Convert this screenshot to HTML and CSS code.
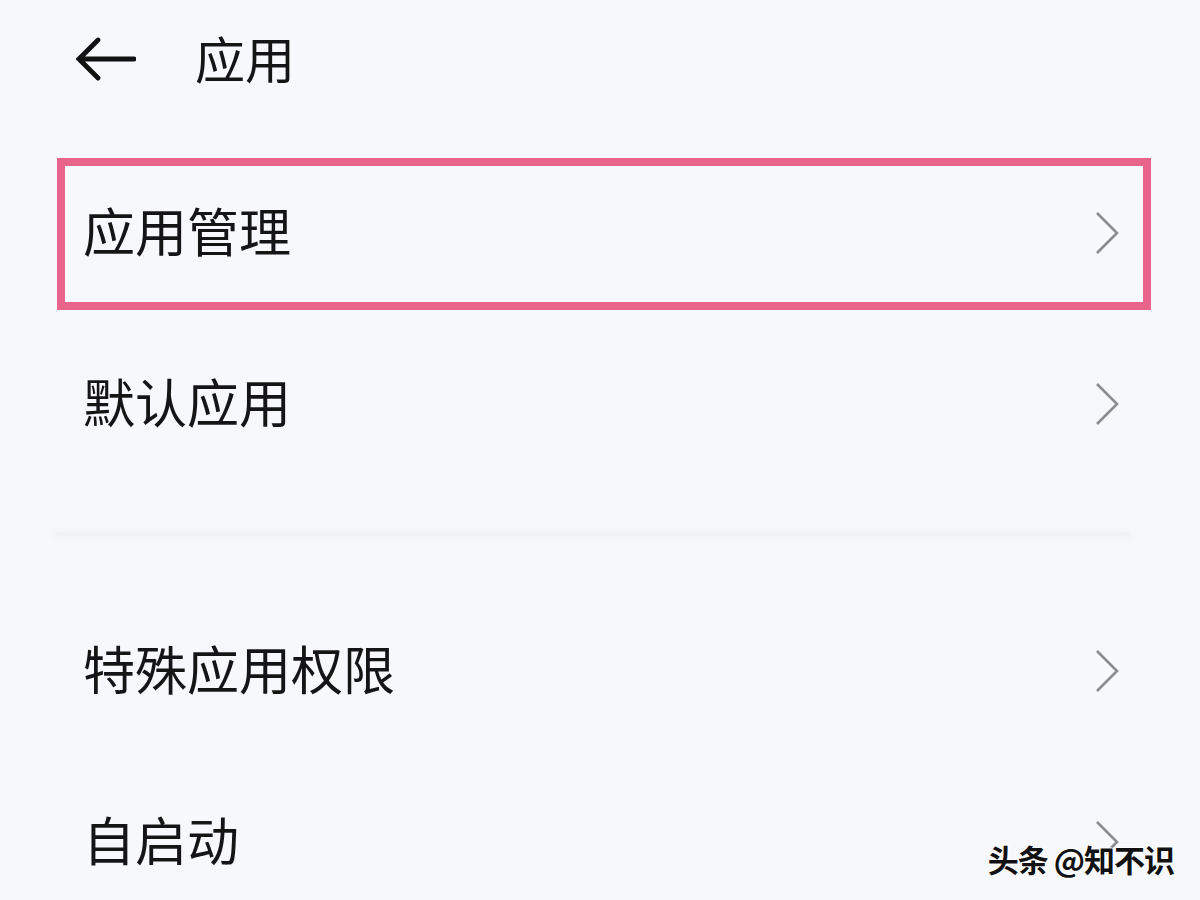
FILE: index.html
```html
<!DOCTYPE html>
<html lang="zh-CN">
<head>
<meta charset="utf-8">
<title>应用</title>
<link rel="stylesheet" href="styles.css">
</head>
<body>
<div class="screen">
  <header class="topbar">
    <svg class="back" width="60" height="44" viewBox="0 0 60 44" aria-hidden="true">
      <path d="M3 22 H58 M22 3 L3 22 L22 41" fill="none" stroke="#111" stroke-width="4.8" stroke-linecap="round" stroke-linejoin="miter"/>
    </svg>
    <h1 class="title">应用</h1>
  </header>
  <main class="list">
    <div class="row row-marked">
      <span class="label">应用管理</span>
      <svg class="chev" width="24" height="44" viewBox="0 0 24 44" aria-hidden="true"><path d="M2 2 L22 22 L2 42" fill="none" stroke="#8c8c8c" stroke-width="2.6"/></svg>
    </div>
    <div class="row">
      <span class="label">默认应用</span>
      <svg class="chev" width="24" height="44" viewBox="0 0 24 44" aria-hidden="true"><path d="M2 2 L22 22 L2 42" fill="none" stroke="#8c8c8c" stroke-width="2.6"/></svg>
    </div>
    <div class="divider"></div>
    <div class="row">
      <span class="label">特殊应用权限</span>
      <svg class="chev" width="24" height="44" viewBox="0 0 24 44" aria-hidden="true"><path d="M2 2 L22 22 L2 42" fill="none" stroke="#8c8c8c" stroke-width="2.6"/></svg>
    </div>
    <div class="row">
      <span class="label">自启动</span>
      <svg class="chev" width="24" height="44" viewBox="0 0 24 44" aria-hidden="true"><path d="M2 2 L22 22 L2 42" fill="none" stroke="#8c8c8c" stroke-width="2.6"/></svg>
    </div>
  </main>
  <div class="watermark">头条 @知不识</div>
</div>
</body>
</html>
```

FILE: styles.css
```css
html, body {
  margin: 0;
  padding: 0;
}

body {
  background: #f7f8fc;
  font-family: "Noto Sans CJK SC", "Noto Sans", sans-serif;
  color: #151515;
}

.screen {
  position: relative;
  width: 1200px;
  height: 900px;
  overflow: hidden;
  background: #f7f8fc;
}

.topbar {
  height: 120px;
  display: flex;
  align-items: center;
  padding-left: 76px;
  box-sizing: border-box;
}

.back {
  display: block;
  margin-top: -2px;
}

.title {
  margin: -6px 0 0 59px;
  font-size: 50px;
  font-weight: 400;
  line-height: 1;
  color: #151515;
}

.list {
  padding-top: 38px;
  display: flex;
  flex-direction: column;
}

.row {
  box-sizing: border-box;
  height: 152px;
  margin: 0 49px 19px 57px;
  border: 8px solid transparent;
  padding: 0 24px 0 18px;
  display: flex;
  align-items: center;
  justify-content: space-between;
}

.row-marked {
  border-color: #e8648d;
}

.label {
  margin-top: -8px;
  font-size: 52px;
  line-height: 1;
  font-weight: 400;
  color: #151515;
}

.chev {
  display: block;
  margin-top: -2px;
}

.divider {
  height: 4px;
  margin: 32px 70px 60px 55px;
  background: #f1f2f6;
  border-radius: 2px;
  box-shadow: 0 0 6px 2px #f2f3f7;
}

.watermark {
  position: absolute;
  right: 26px;
  bottom: 26px;
  font-size: 31px;
  line-height: 1;
  font-weight: 700;
  color: #111;
  letter-spacing: -1px;
  text-shadow: 0 0 2px #fff, 1px 1px 0 #fff, -1px -1px 0 #fff, 2px 0 1px #fff;
}
```
